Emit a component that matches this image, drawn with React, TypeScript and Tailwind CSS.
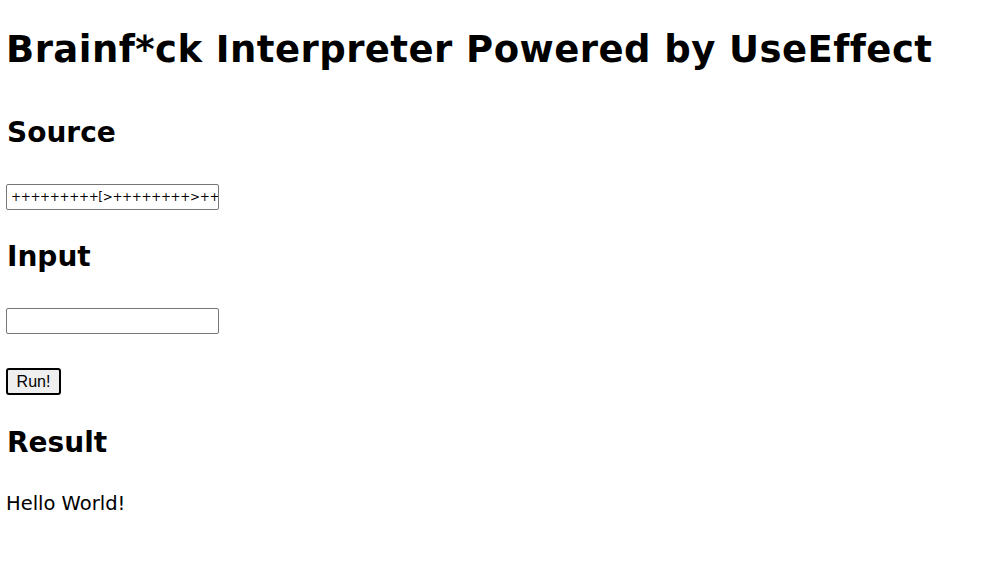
const SOURCE =
  '+++++++++[>++++++++>+++++++++++>+++++<<<-]>.>++.+++++++..+++.>-.------------.<++++++++.--------.+++.------.--------.>+.'

export default function App() {
  return (
    <div className="min-h-screen bg-white pl-[6px] pt-[26px] text-black font-['DejaVu_Sans',sans-serif]">
      <h1 className="whitespace-nowrap text-[37px] font-bold leading-[48px] tracking-[0.45px]">
        Brainf*ck Interpreter Powered by UseEffect
      </h1>

      <h2 className="mt-[41px] ml-[1px] text-[28px] font-bold leading-[36px]">Source</h2>
      <input
        type="text"
        defaultValue={SOURCE}
        className="mt-[33px] block h-[26px] w-[213px] rounded-[2px] border border-[#767676] pl-[4px] text-[12px] tracking-[-0.35px] text-black outline-none"
      />

      <h2 className="mt-[29px] ml-[1px] text-[28px] font-bold leading-[36px]">Input</h2>
      <input
        type="text"
        className="mt-[33px] block h-[26px] w-[213px] rounded-[2px] border border-[#767676] pl-[4px] text-[12px] outline-none"
      />

      <button className="mt-[34px] block h-[27px] w-[55px] rounded-[3px] border-2 border-black bg-[#efefef] font-['Liberation_Sans',sans-serif] text-[16px] leading-none text-black">
        Run!
      </button>

      <h2 className="mt-[30px] ml-[1px] text-[28px] font-bold leading-[36px]">Result</h2>
      <p className="mt-[31px] text-[19.5px] leading-[24px]">Hello World!</p>
    </div>
  )
}
